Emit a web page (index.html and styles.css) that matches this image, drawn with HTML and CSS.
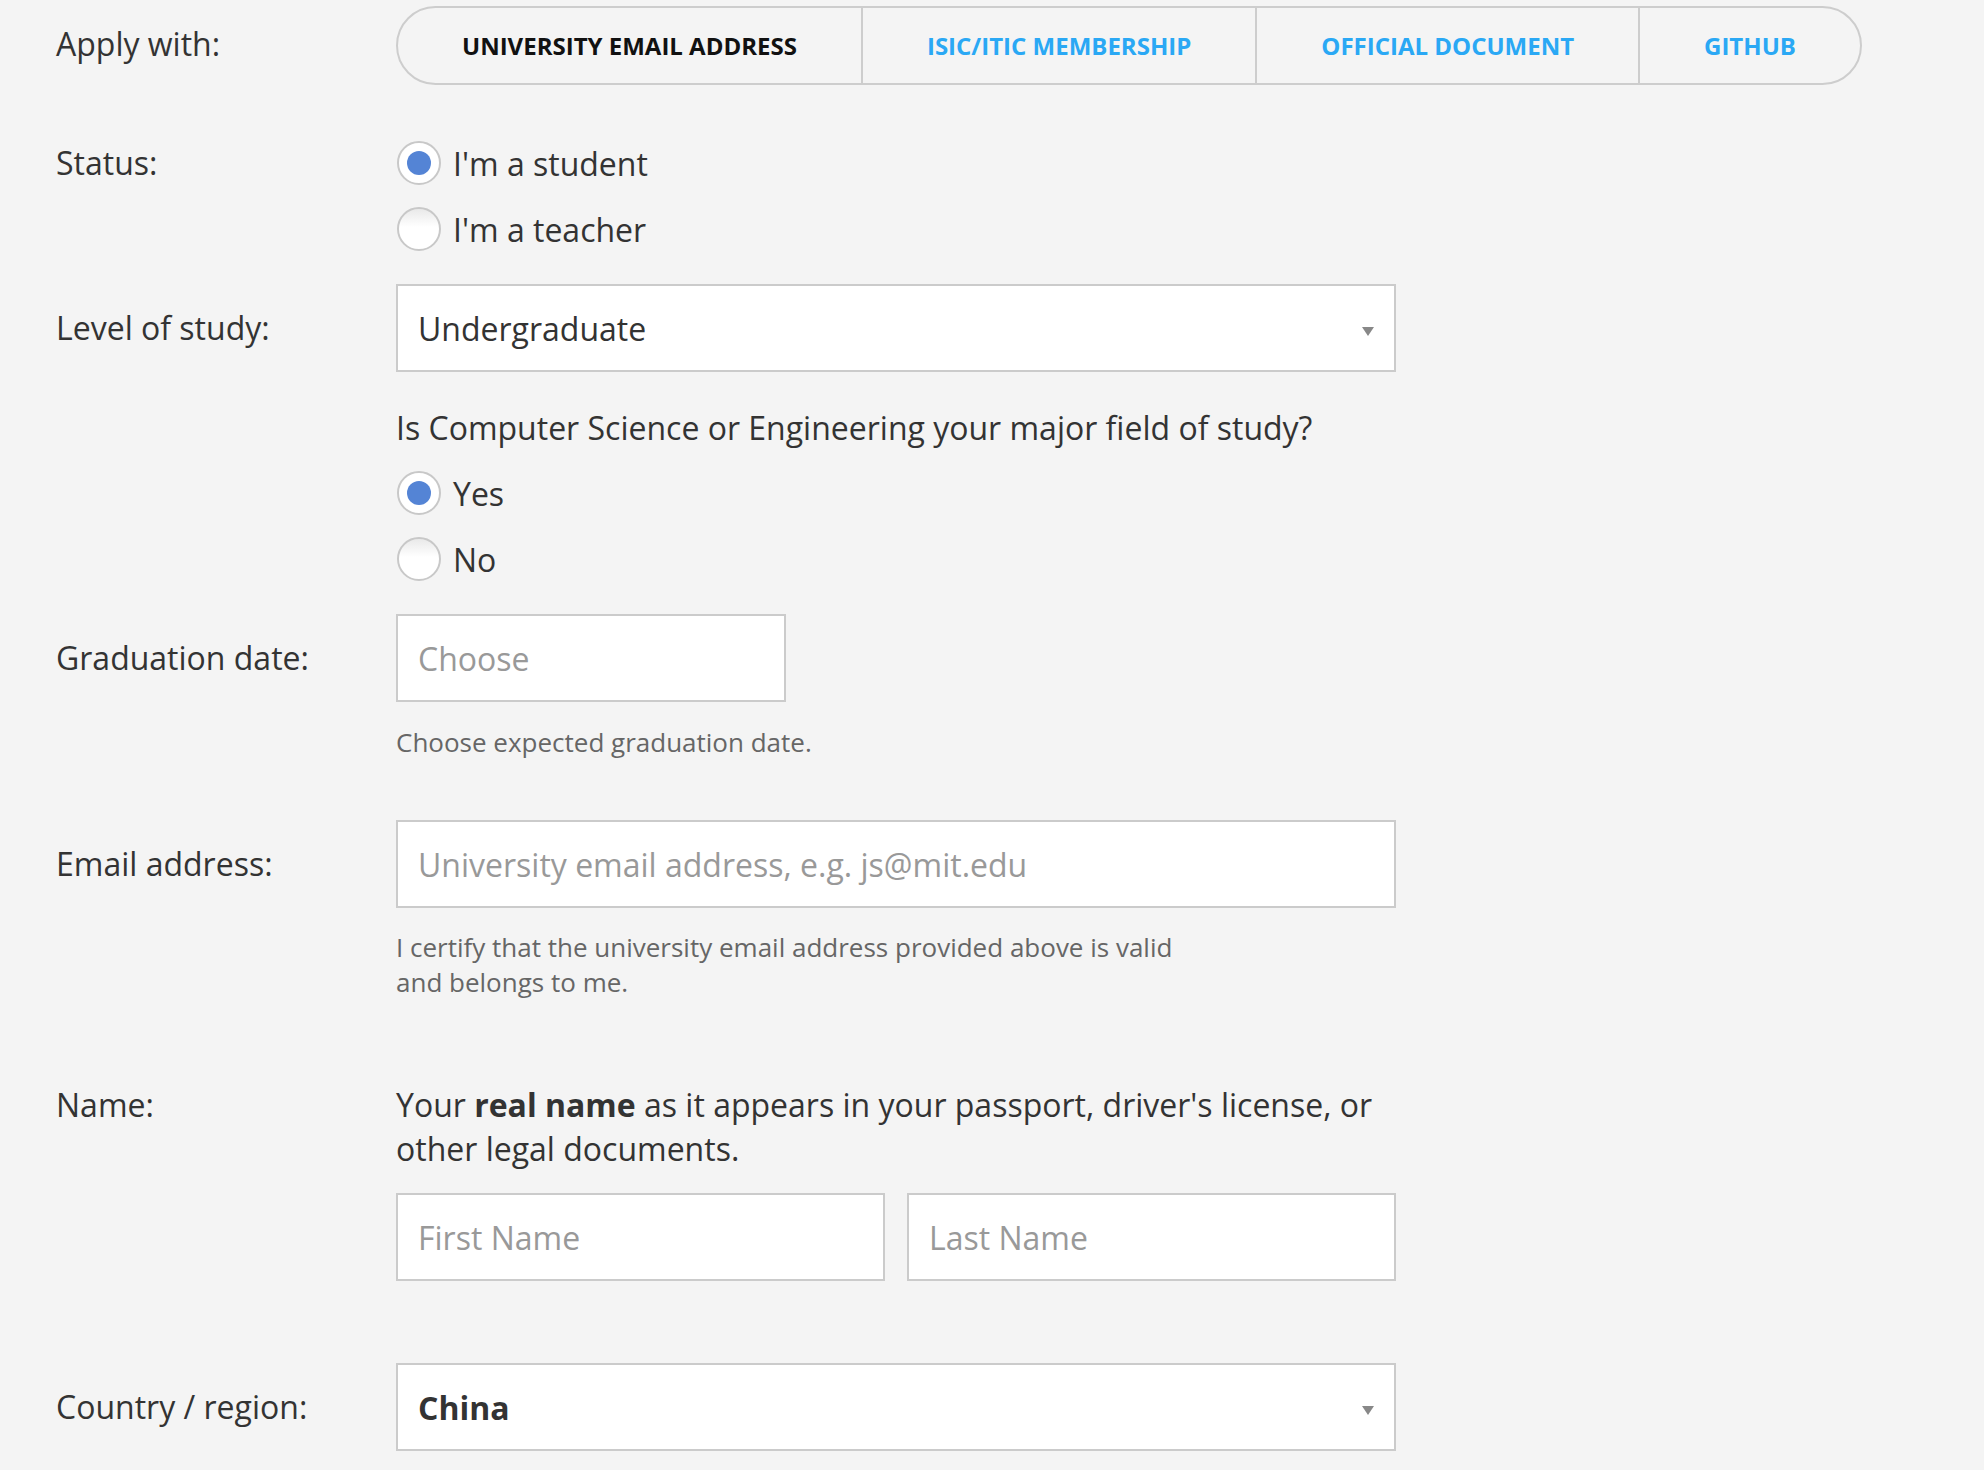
FILE: index.html
```html
<!DOCTYPE html>
<html lang="en">
<head>
<meta charset="utf-8">
<title>Apply</title>
<link rel="stylesheet" href="styles.css">
</head>
<body>
<form class="form">
  <div class="row row-apply">
    <div class="label label-apply">Apply with:</div>
    <div class="tabs">
      <span class="tab tab-active">University Email Address</span>
      <span class="tab">ISIC/ITIC Membership</span>
      <span class="tab">Official Document</span>
      <span class="tab">GitHub</span>
    </div>
  </div>

  <div class="row row-status">
    <div class="label label-radio">Status:</div>
    <div class="radios">
      <label class="radio"><span class="radio-dot checked"></span>I'm a student</label>
      <label class="radio"><span class="radio-dot"></span>I'm a teacher</label>
    </div>
  </div>

  <div class="row row-level">
    <div class="label label-box">Level of study:</div>
    <div class="field">
      <div class="select"><span class="select-value">Undergraduate</span><span class="arrow"></span></div>
      <p class="question">Is Computer Science or Engineering your major field of study?</p>
      <div class="radios">
        <label class="radio"><span class="radio-dot checked"></span>Yes</label>
        <label class="radio"><span class="radio-dot"></span>No</label>
      </div>
    </div>
  </div>

  <div class="row row-grad">
    <div class="label label-box">Graduation date:</div>
    <div class="field">
      <div class="input input-short placeholder">Choose</div>
      <p class="help help-grad">Choose expected graduation date.</p>
    </div>
  </div>

  <div class="row row-email">
    <div class="label label-box">Email address:</div>
    <div class="field">
      <div class="input placeholder">University email address, e.g. js@mit.edu</div>
      <p class="help help-email">I certify that the university email address provided above is valid and belongs to me.</p>
    </div>
  </div>

  <div class="row row-name">
    <div class="label label-text">Name:</div>
    <div class="field">
      <p class="desc">Your <strong>real name</strong> as it appears in your passport, driver's license, or other legal documents.</p>
      <div class="name-inputs">
        <div class="input placeholder">First Name</div>
        <div class="input placeholder">Last Name</div>
      </div>
    </div>
  </div>

  <div class="row row-country">
    <div class="label label-box">Country / region:</div>
    <div class="field">
      <div class="select"><span class="select-value bold">China</span><span class="arrow"></span></div>
    </div>
  </div>
</form>
</body>
</html>
```

FILE: styles.css
```css
* { box-sizing: border-box; }

html, body {
  margin: 0;
  padding: 0;
  background: #f4f4f4;
}

body {
  font-family: "Open Sans", "Liberation Sans", sans-serif;
  color: #333;
  font-size: 32px;
}

.form {
  padding: 6px 56px 0 56px;
}

.row {
  display: grid;
  grid-template-columns: 340px 1000px;
}

.label {
  font-size: 32px;
  color: #333;
  white-space: nowrap;
}

.label-apply { line-height: 79px; margin-top: -2px; }
.label-radio { line-height: 66px; }
.label-box { line-height: 88px; }
.label-text { line-height: 44px; }

/* Tabs */
.tabs {
  display: flex;
  justify-self: start;
  height: 79px;
  border: 2px solid #cdcdcd;
  border-radius: 40px;
  overflow: hidden;
  width: max-content;
}

.tab {
  display: flex;
  align-items: center;
  padding: 0 64px;
  font-size: 24px;
  font-weight: 700;
  text-transform: uppercase;
  color: #2aa8f4;
  border-left: 2px solid #cdcdcd;
  white-space: nowrap;
}

.tab:first-child { border-left: none; padding-left: 64px; }
.tab-active { color: #111; }

/* Radios */
.row-status { margin-top: 45px; }

.radios {
  display: flex;
  flex-direction: column;
}

.radio {
  display: flex;
  align-items: center;
  height: 66px;
  font-size: 32px;
  color: #333;
}

.radio-dot {
  width: 44px;
  height: 44px;
  border-radius: 50%;
  border: 2px solid #c8c8c8;
  background: linear-gradient(#e9e9e9, #fff 45%);
  margin-left: 1px;
  margin-right: 12px;
  position: relative;
  flex: none;
}

.radio-dot.checked {
  background: #fff;
}

.radio-dot.checked::after {
  content: "";
  position: absolute;
  left: 8px;
  top: 8px;
  width: 24px;
  height: 24px;
  border-radius: 50%;
  background: #5484d5;
}

/* Fields */
.row-level { margin-top: 22px; }

.field {
  display: flex;
  flex-direction: column;
}

.select, .input {
  height: 88px;
  border: 2px solid #cbcbcb;
  background: #fff;
  display: flex;
  align-items: center;
  padding: 0 20px;
  font-size: 32px;
  color: #333;
}

.select {
  justify-content: space-between;
  padding-right: 20px;
}

.select-value.bold { font-weight: 700; }

.arrow {
  width: 0;
  height: 0;
  border-left: 6px solid transparent;
  border-right: 6px solid transparent;
  border-top: 9px solid #888;
  margin-top: 6px;
}

.question {
  margin: 34px 0 10px;
  line-height: 44px;
  font-size: 32px;
}

.placeholder { color: #999; }

.row-grad { margin-top: 22px; }

.input-short { width: 390px; }

.help {
  margin: 0;
  font-size: 26px;
  line-height: 35px;
  color: #666;
}

.help-grad { margin-top: 23px; }

.row-email { margin-top: 60px; }

.help-email { margin-top: 22px; max-width: 790px; }

.row-name { margin-top: 83px; }

.desc {
  margin: 0;
  font-size: 32px;
  line-height: 44px;
  color: #333;
}

.desc strong { font-weight: 700; }

.name-inputs {
  display: grid;
  grid-template-columns: 1fr 1fr;
  gap: 22px;
  margin-top: 22px;
}

.row-country { margin-top: 82px; }
```
